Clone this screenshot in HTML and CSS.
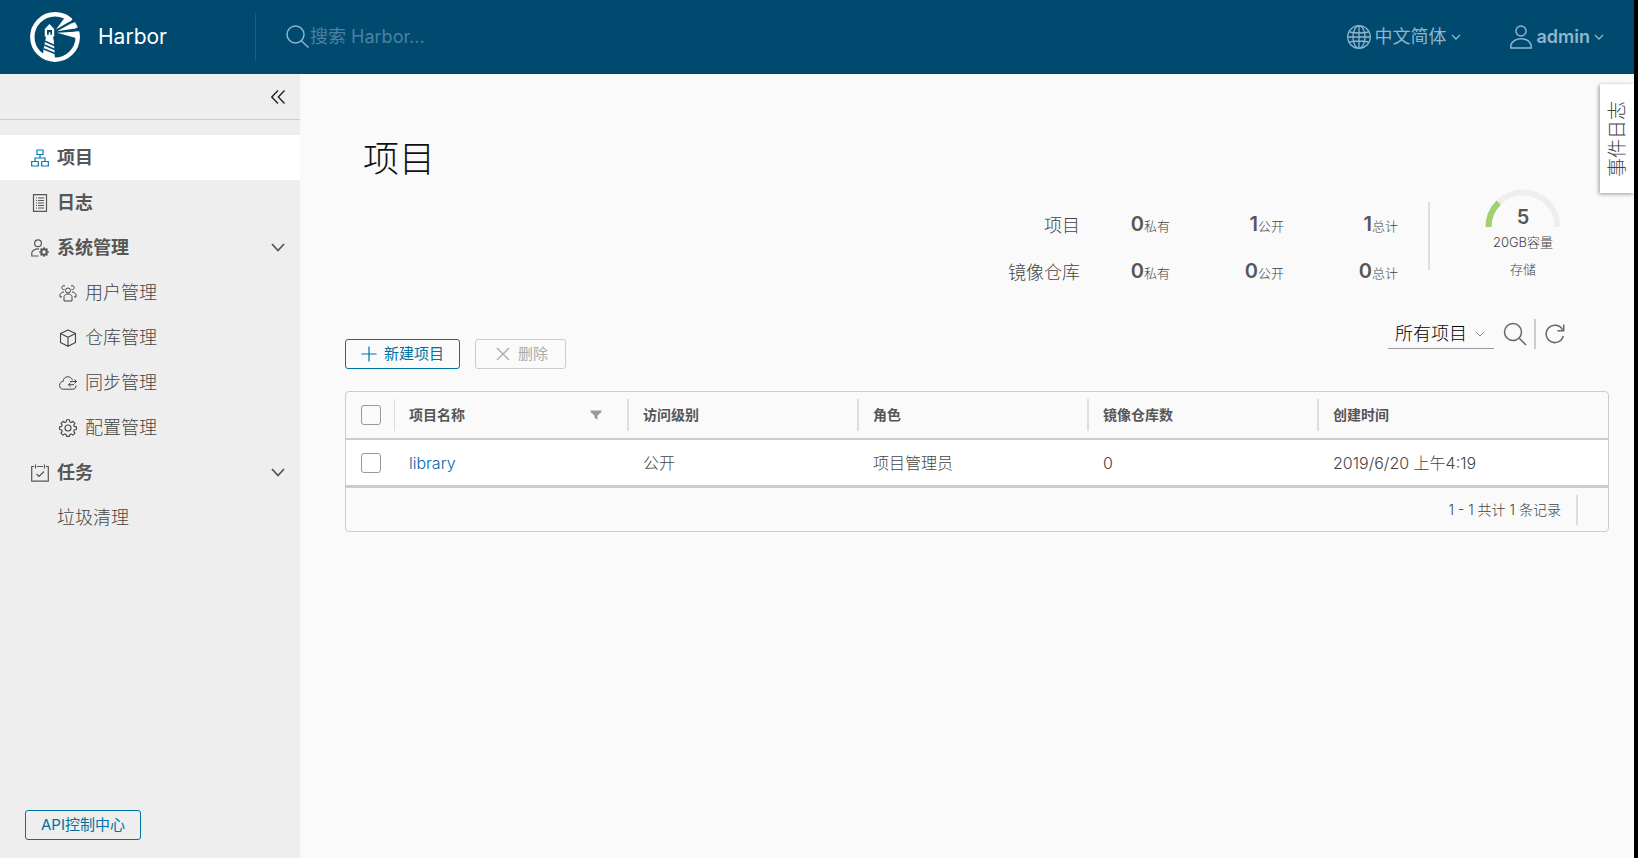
FILE: index.html
```html
<!DOCTYPE html>
<html lang="zh-CN">
<head>
<meta charset="utf-8">
<title>Harbor</title>
<link rel="stylesheet" href="styles.css">
</head>
<body>
<div class="app">
  <header class="header">
    <a class="brand" href="#">
      <svg class="brand-logo" viewBox="0 0 50 50" aria-hidden="true">
        <circle cx="25" cy="25" r="22.7" fill="none" stroke="#fff" stroke-width="4.400"/>
        <path d="M27 18.400L41 8.800l3-3 3 3-5 3zM27 20L45 16.500l5-2.500v5.500z" fill="#004a70"/>
        <path d="M26 17.500L34.500 6l1-4L42 6.500 40.500 9zM27 19.300L41 11.500l3.500-1 2.500 4.500-2 1.500zM27 20.800l22-1.300.5 7.500z" fill="#fff"/>
        <path d="M14.800 17l4.700-5 4.700 5v7.500h-1V29h-7.400v-4.500h-1z" fill="#fff"/>
        <path d="M17 18h5v4.800h-1.600v-2.500h-1.600v2.500H17z" fill="#004a70"/>
        <path d="M15.300 27.500h8.400L25 47.500l-12.500-3z" fill="#fff"/>
        <path d="M14.500 29l10 4.500M14.300 33l10.500 4.500M14 37l11 4.500" stroke="#004a70" stroke-width="1.400"/>
      </svg>
      <span class="brand-name">Harbor</span>
    </a>
    <label class="search">
      <svg class="icon-24" viewBox="0 0 24 24" fill="none" stroke="currentColor" stroke-width="1.500" aria-hidden="true"><circle cx="9.500" cy="9.500" r="8.500"/><path d="M15.500 16l7 6.500"/></svg>
      <input class="search-input" type="search" placeholder="搜索 Harbor..." aria-label="搜索 Harbor">
    </label>
    <nav class="header-actions">
      <button class="header-button" type="button">
        <svg class="icon-24" viewBox="0 0 24 24" fill="none" stroke="currentColor" stroke-width="1.300" aria-hidden="true"><circle cx="12" cy="12" r="11.300"/><ellipse cx="12" cy="12" rx="6" ry="11.300"/><path d="M12 1v22M1 12h22M2.500 7Q12 9 21.500 7M2.500 17Q12 15 21.500 17"/></svg>
        <span>中文简体</span>
        <svg class="caret" viewBox="0 0 10 6" fill="none" stroke="currentColor" stroke-width="1.300" aria-hidden="true"><path d="M1 1l4 4 4-4"/></svg>
      </button>
      <button class="header-button" type="button">
        <svg class="icon-24" viewBox="0 0 24 26" fill="none" stroke="currentColor" stroke-width="1.600" aria-hidden="true"><circle cx="12" cy="6.500" r="5.500"/><path d="M1 25v-3.500C3 17 7.500 14.800 12 14.800s9 2.200 11 6.700V25z"/></svg>
        <span class="user-name">admin</span>
        <svg class="caret" viewBox="0 0 10 6" fill="none" stroke="currentColor" stroke-width="1.300" aria-hidden="true"><path d="M1 1l4 4 4-4"/></svg>
      </button>
    </nav>
  </header>

  <div class="body">
    <aside class="sidebar">
      <div class="sidebar-top">
        <button class="collapse" type="button" aria-label="收起">
          <svg viewBox="0 0 14 14" fill="none" stroke="currentColor" stroke-width="1.400" aria-hidden="true"><path d="M7 .5L.8 7 7 13.500M13.500.5L7.300 7l6.200 6.500"/></svg>
        </button>
      </div>
      <nav class="menu">
        <a class="menu-item active" href="#">
          <svg class="icon-18" viewBox="0 0 18 18" fill="none" stroke="currentColor" stroke-width="1.200" aria-hidden="true"><path d="M6 1h6v4.500H6zM.7 12.500h6.600V17H.7zM10.700 12.500h6.600V17h-6.600zM9 5.500V9M4 12.500V9h10v3.500"/></svg>
          <span>项目</span>
        </a>
        <a class="menu-item" href="#">
          <svg class="icon-18" viewBox="0 0 18 18" fill="none" stroke="currentColor" stroke-width="1.200" aria-hidden="true"><path d="M2.500.7h13v16.600h-13z"/><path d="M5 4h1M7 4h6M5 6.500h1M7 6.500h6M5 9h1M7 9h6M5 11.500h1M7 11.500h6M5 14h1M7 14h6" stroke-width="1"/></svg>
          <span>日志</span>
        </a>
        <a class="menu-item" href="#">
          <svg class="icon-18" viewBox="0 0 18 18" fill="none" stroke="currentColor" stroke-width="1.200" aria-hidden="true"><circle cx="7" cy="4.200" r="3.400"/><path d="M7.500 17H.8v-3.500C2 11 4.500 9.700 8 9.900"/><circle cx="13" cy="13" r="2.700" stroke-width="2"/><path d="M13 8.200v9.600M8.200 13h9.600M9.600 9.600l1.500 1.500M14.900 14.900l1.500 1.500M9.600 16.400l1.500-1.500M14.900 11.100l1.500-1.500" stroke-width="1.600"/><circle cx="13" cy="13" r="1.700" fill="#eee" stroke="none"/></svg>
          <span>系统管理</span>
          <svg class="chevron" viewBox="0 0 14 9" fill="none" stroke="currentColor" stroke-width="1.800" aria-hidden="true"><path d="M1 1l6 6.500L13 1"/></svg>
        </a>
        <a class="menu-item sub" href="#">
          <svg class="icon-18" viewBox="0 0 18 18" fill="none" stroke="currentColor" stroke-width="1" aria-hidden="true"><circle cx="9" cy="6.500" r="2.500"/><path d="M5 17v-4.500c.5-1.700 2-2.500 4-2.500s3.500.8 4 2.500V17zM5.500 5.500a2 2 0 1 1 .5-3.500M12.500 5.500A2 2 0 1 0 12 2M5 8C3 8 1.500 9 1 10.500V13h2M13 8c2 0 3.500 1 4 2.500V13h-2"/></svg>
          <span>用户管理</span>
        </a>
        <a class="menu-item sub" href="#">
          <svg class="icon-18" viewBox="0 0 18 18" fill="none" stroke="currentColor" stroke-width="1.100" stroke-linejoin="round" aria-hidden="true"><path d="M9 1l7.500 3.500v9L9 17.300l-7.500-3.800v-9zM1.500 4.500L9 8.300l7.500-3.800M9 8.300v9"/></svg>
          <span>仓库管理</span>
        </a>
        <a class="menu-item sub" href="#">
          <svg class="icon-18" viewBox="0 0 18 18" fill="none" stroke="currentColor" stroke-width="1" aria-hidden="true"><path d="M13.500 6.200C12.800 3.900 11 2.800 8.800 2.800 6 2.800 4.300 4.700 4.200 7.300 2 7.600.6 9 .6 11.500c0 2.300 1.400 3.700 3.600 3.700h9.300c2.300 0 3.700-1.300 3.500-3.700"/><path d="M11 7.500h6.500M15.500 5.500l2 2-2 2M15 10.700H9.500M11.500 8.700l-2 2 2 2"/></svg>
          <span>同步管理</span>
        </a>
        <a class="menu-item sub" href="#">
          <svg class="icon-18" viewBox="0 0 18 18" fill="none" stroke="currentColor" stroke-width="1.100" stroke-linejoin="round" aria-hidden="true"><circle cx="9" cy="9" r="3"/><path d="M7.600.8h2.800l.5 2.200 1.200.5 1.900-1.200 2 2-1.300 1.900.5 1.200 2.200.4v2.700l-2.200.5-.5 1.200 1.200 1.900-2 2-1.800-1.200-1.200.5-.5 2H7.600l-.5-2-1.200-.5-1.900 1.200-2-2 1.200-1.900-.5-1.200-2.100-.5V7.800l2.100-.4.5-1.200L2 4.300l2-2 1.900 1.200L7.100 3z"/></svg>
          <span>配置管理</span>
        </a>
        <a class="menu-item" href="#">
          <svg class="icon-18" viewBox="0 0 18 18" fill="none" stroke="currentColor" stroke-width="1.200" aria-hidden="true"><path d="M3 2.500H.7v14.700h16.600V2.500H15M6 2.500h6M4.500.5v4M13.500.5v4M5.500 10l2.500 2.500L13 7.500"/></svg>
          <span>任务</span>
          <svg class="chevron" viewBox="0 0 14 9" fill="none" stroke="currentColor" stroke-width="1.800" aria-hidden="true"><path d="M1 1l6 6.500L13 1"/></svg>
        </a>
        <a class="menu-item plain" href="#"><span>垃圾清理</span></a>
      </nav>
      <div class="sidebar-bottom">
        <button class="btn" type="button">API控制中心</button>
      </div>
    </aside>

    <main class="content">
      <h1 class="title">项目</h1>
      <section class="summary">
        <div class="stats">
          <span class="stat-label">项目</span>
          <span class="stat"><b>0</b>私有</span>
          <span class="stat"><b>1</b>公开</span>
          <span class="stat"><b>1</b>总计</span>
          <span class="stat-label">镜像仓库</span>
          <span class="stat"><b>0</b>私有</span>
          <span class="stat"><b>0</b>公开</span>
          <span class="stat"><b>0</b>总计</span>
        </div>
        <div class="gauge">
          <div class="gauge-dial">
            <svg class="gauge-arc" viewBox="0 0 76 38" fill="none" stroke-width="6" aria-hidden="true"><path d="M3.500 38a34.500 34.500 0 0 1 69 0" stroke="#eee"/><path d="M3.500 38A34.500 34.500 0 0 1 13.600 13.600" stroke="#9fd26f"/></svg>
            <span class="gauge-value">5</span>
          </div>
          <span class="gauge-text">20GB容量</span>
          <span class="gauge-text">存储</span>
        </div>
      </section>

      <section class="toolbar">
        <div class="actions">
          <button class="btn" type="button"><svg class="icon-16" viewBox="0 0 16 16" stroke="currentColor" stroke-width="1.200" aria-hidden="true"><path d="M8 .5v15M.5 8h15"/></svg>新建项目</button>
          <button class="btn" type="button" disabled><svg class="icon-16" viewBox="0 0 16 16" stroke="currentColor" stroke-width="1.300" aria-hidden="true"><path d="M2 2l12 12M14 2L2 14"/></svg>删除</button>
        </div>
        <div class="filters">
          <div class="select-wrap">
            <select class="select" aria-label="项目类型"><option>所有项目</option></select>
            <svg class="caret select-caret" viewBox="0 0 10 6" fill="none" stroke="currentColor" stroke-width="1" aria-hidden="true"><path d="M.5.5L5 5 9.500.5"/></svg>
          </div>
          <button class="icon-button" type="button" aria-label="搜索"><svg class="icon-24" viewBox="0 0 24 24" fill="none" stroke="currentColor" stroke-width="1.500" aria-hidden="true"><circle cx="10" cy="10" r="8.500"/><path d="M16 16l7 7"/></svg></button>
          <button class="icon-button refresh" type="button" aria-label="刷新"><svg class="icon-20" viewBox="0 0 20 20" fill="none" stroke="currentColor" stroke-width="1.500" aria-hidden="true"><path d="M18.300 12A8.700 8.700 0 1 1 17.500 5.700M18.700.5v6.300h-6.300"/></svg></button>
        </div>
      </section>

      <section class="grid">
        <table class="table">
          <colgroup><col class="col-check"><col class="col-name"><col class="col-mid"><col class="col-mid"><col class="col-mid"><col></colgroup>
          <thead>
            <tr>
              <th><input class="check" type="checkbox" aria-label="全选"></th>
              <th><div class="th thin">项目名称<svg class="funnel" viewBox="0 0 12 10" fill="#999" aria-hidden="true"><path d="M.5.5h11v1.500L7.500 5.500V9.500l-3-1.500V5.500L.5 2z"/></svg></div></th>
              <th><div class="th">访问级别</div></th>
              <th><div class="th">角色</div></th>
              <th><div class="th">镜像仓库数</div></th>
              <th><div class="th">创建时间</div></th>
            </tr>
          </thead>
          <tbody>
            <tr>
              <td><input class="check" type="checkbox" aria-label="选择 library"></td>
              <td><a class="link" href="#">library</a></td>
              <td>公开</td>
              <td>项目管理员</td>
              <td>0</td>
              <td>2019/6/20 上午4:19</td>
            </tr>
          </tbody>
        </table>
        <div class="grid-footer"><span class="count">1 - 1 共计 1 条记录</span></div>
      </section>
      <button class="event-tab" type="button"><span>事件日志</span></button>
    </main>
  </div>
</div>
</body>
</html>
```
FILE: styles.css
```css
* { box-sizing: border-box; }

body {
  margin: 0;
  background: #000;
  color: #565656;
  font: 14px/24px Inter, "Noto Sans CJK SC", sans-serif;
}

button, input, select { font: inherit; }
button { cursor: pointer; }
a { text-decoration: none; }
svg { display: block; flex: none; }

.icon-16 { width: 16px; height: 16px; }
.icon-18 { width: 18px; height: 18px; }
.icon-20 { width: 20px; height: 20px; }
.icon-24 { width: 24px; height: 24px; }
.caret { width: 10px; height: 6px; }

.app {
  display: flex;
  flex-direction: column;
  min-height: 100vh;
  margin-right: 4px;
  background: #fafafa;
}

/* Header */
.header {
  display: flex;
  align-items: center;
  height: 74px;
  background: #004a70;
  color: #8fb6cc;
}
.brand {
  display: flex;
  align-items: center;
  gap: 18px;
  width: 256px;
  height: 48px;
  padding-left: 30px;
  border-right: 1px solid #1c5f82;
  color: #fff;
}
.brand-logo { width: 50px; height: 50px; }
.brand-name { font-size: 21px; }
.search {
  display: flex;
  flex: 1;
  align-items: center;
  padding-left: 30px;
}
.search-input {
  flex: 1;
  min-width: 0;
  padding: 0;
  border: 0;
  outline: 0;
  background: none;
  color: #fff;
  font-size: 18px;
}
.search-input::placeholder { color: #4a82a0; opacity: 1; }
.header-actions {
  display: flex;
  gap: 48px;
  padding-right: 30px;
}
.header-button {
  display: flex;
  align-items: center;
  gap: 4px;
  padding: 0;
  border: 0;
  background: none;
  color: inherit;
  font-size: 18px;
}
.user-name { font-weight: 600; }

/* Sidebar */
.body { display: flex; flex: 1; }
.sidebar {
  display: flex;
  flex: none;
  flex-direction: column;
  width: 300px;
  background: #eee;
}
.sidebar-top {
  display: flex;
  align-items: center;
  justify-content: flex-end;
  height: 46px;
  padding-right: 15px;
  border-bottom: 1px solid #ccc;
}
.collapse {
  width: 14px;
  padding: 0;
  border: 0;
  background: none;
  color: #222;
}
.menu { padding-top: 15px; }
.menu-item {
  display: flex;
  align-items: center;
  gap: 8px;
  height: 45px;
  padding: 0 15px 0 31px;
  color: #565656;
  font-size: 18px;
  font-weight: 700;
}
.menu-item.active { background: #fff; }
.menu-item.active svg { color: #0079b8; }
.menu-item.sub { padding-left: 59px; color: #444; font-weight: 300; }
.menu-item.plain { padding-left: 57px; color: #444; font-weight: 300; }
.chevron { width: 14px; height: 9px; margin-left: auto; }
.sidebar-bottom { margin-top: auto; padding: 0 25px 18px; }

.btn {
  display: inline-flex;
  align-items: center;
  gap: 7px;
  height: 30px;
  padding: 0 15px;
  border: 1px solid #0072a3;
  border-radius: 3px;
  background: none;
  color: #0072a3;
  font-size: 15px;
}
.btn:disabled { padding: 0 17px 0 19px; border-color: #ccc; color: #aaa; cursor: default; }

/* Content */
.content {
  position: relative;
  flex: 1;
  min-width: 0;
  padding: 60px 25px 30px 45px;
}
.title {
  margin: 0;
  padding-left: 18px;
  color: #111;
  font-size: 36px;
  font-weight: 300;
  line-height: 50px;
}
.summary {
  display: flex;
  justify-content: flex-end;
  margin-top: 5px;
  padding-right: 48px;
}
.stats {
  display: grid;
  grid-template-columns: 100px 90px 114px 114px;
  align-content: start;
  height: 68px;
  margin-top: 13px;
  padding-right: 30px;
  border-right: 2px solid #ddd;
  color: #444;
  font-weight: 300;
  text-align: right;
}
.stat-label { font-size: 18px; line-height: 47px; }
.stat { font-size: 13px; line-height: 44px; }
.stat b { color: #565656; font-size: 20px; font-weight: 600; }
.gauge {
  display: flex;
  flex-direction: column;
  align-items: center;
  margin-left: 55px;
}
.gauge-dial {
  display: grid;
  justify-items: center;
  align-items: end;
  margin-bottom: 2px;
}
.gauge-arc, .gauge-value { grid-area: 1 / 1; }
.gauge-arc { width: 76px; height: 38px; }
.gauge-value { font-size: 20px; font-weight: 600; line-height: 20px; }
.gauge-text { color: #444; font-size: 13px; font-weight: 300; line-height: 27px; }

.toolbar {
  display: flex;
  align-items: flex-end;
  justify-content: space-between;
  margin-top: 36px;
}
.actions { display: flex; gap: 15px; }
.filters {
  display: flex;
  align-items: center;
  margin-bottom: 20px;
  padding-right: 44px;
}
.select-wrap { display: grid; align-items: center; justify-items: end; }
.select, .select-caret { grid-area: 1 / 1; }
.select {
  width: 106px;
  height: 30px;
  padding: 0 24px 0 7px;
  border: 0;
  border-bottom: 1px solid #999;
  border-radius: 0;
  appearance: none;
  background: none;
  color: #000;
  font-size: 18px;
  font-weight: 300;
}
.select-caret { margin-right: 9px; color: #888; pointer-events: none; }
.icon-button {
  padding: 0 0 0 9px;
  border: 0;
  background: none;
  color: #666;
}
.refresh {
  margin-left: 7px;
  padding: 5px 0 5px 9px;
  border-left: 2px solid #ccc;
}

/* Data grid */
.grid {
  margin-top: 22px;
  border: 1px solid #ccc;
  border-radius: 4px;
}
.table {
  width: 100%;
  border-collapse: separate;
  border-spacing: 0;
  table-layout: fixed;
  text-align: left;
}
.col-check { width: 48px; }
.col-name { width: 233px; }
.col-mid { width: 230px; }
.table th {
  height: 48px;
  padding: 0;
  border-bottom: 2px solid #ccc;
  font-size: 14px;
  font-weight: 600;
}
.th {
  display: flex;
  align-items: center;
  justify-content: space-between;
  height: 32px;
  padding: 0 25px 0 14px;
  border-left: 2px solid #ddd;
}
.th.thin { border-left-width: 1px; }
.funnel { width: 12px; height: 10px; }
.table td {
  height: 48px;
  padding: 0 0 0 16px;
  border-bottom: 3px solid #ccc;
  background: #fff;
  color: #444;
  font-size: 16px;
  font-weight: 300;
}
.table td:nth-child(2) { padding-left: 15px; }
.table td:first-child { padding-left: 15px; }
.link { color: #0065ab; }
.check {
  display: block;
  width: 20px;
  height: 20px;
  margin: 0;
  border: 1px solid #999;
  border-radius: 3px;
  appearance: none;
}
.table th .check { margin-left: 15px; }
.grid-footer {
  display: flex;
  justify-content: flex-end;
  align-items: center;
  height: 43px;
  padding-right: 30px;
}
.count {
  padding-right: 15px;
  border-right: 2px solid #ddd;
  color: #444;
  font-size: 14px;
  font-weight: 300;
  line-height: 30px;
}

/* Tab fixed to the right edge, over the content */
.event-tab {
  position: absolute;
  top: 10px;
  right: 0;
  display: flex;
  padding: 17px 4px 16px 6px;
  border: 0;
  background: #fff;
  box-shadow: -1px 1px 4px rgba(0, 0, 0, 0.4);
  clip-path: inset(-6px 0 -6px -6px);
  color: #444;
  font-size: 19px;
  font-weight: 300;
}
.event-tab span {
  writing-mode: vertical-rl;
  text-orientation: sideways;
  transform: rotate(180deg);
}
```
